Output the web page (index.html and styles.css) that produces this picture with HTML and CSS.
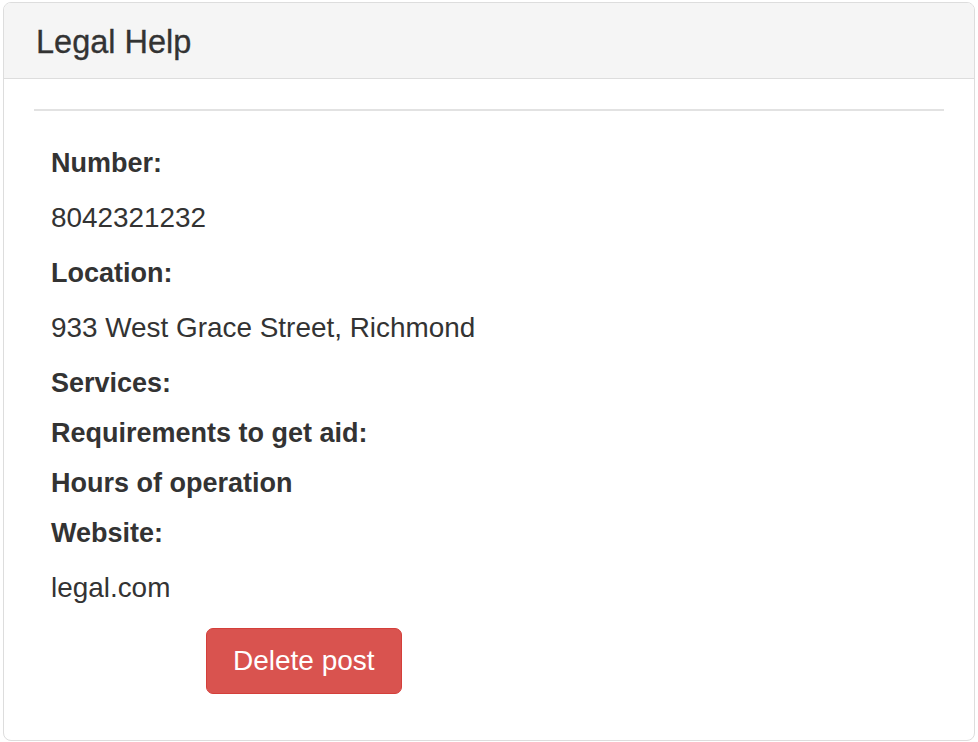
FILE: index.html
```html
<!DOCTYPE html>
<html lang="en">
<head>
<meta charset="utf-8">
<title>Legal Help</title>
<link rel="stylesheet" href="styles.css">
</head>
<body>
  <div class="panel">
    <div class="panel-heading">
      <h3 class="panel-title">Legal Help</h3>
    </div>
    <div class="panel-body">
      <hr class="divider">
      <div class="details">
        <div class="label">Number:</div>
        <div class="value">8042321232</div>
        <div class="label">Location:</div>
        <div class="value">933 West Grace Street, Richmond</div>
        <div class="label">Services:</div>
        <div class="label">Requirements to get aid:</div>
        <div class="label">Hours of operation</div>
        <div class="label">Website:</div>
        <div class="value">legal.com</div>
        <div class="actions">
          <button class="btn-danger" type="button">Delete post</button>
        </div>
      </div>
    </div>
  </div>
</body>
</html>
```

FILE: styles.css
```css
html, body {
  margin: 0;
  padding: 0;
  background: #fff;
}

body {
  font-family: "Liberation Sans", Arial, Helvetica, sans-serif;
  color: #333;
}

.panel {
  margin: 2px 3px;
  border: 1px solid #ddd;
  border-radius: 8px;
  background: #fff;
  overflow: hidden;
}

.panel-heading {
  background: #f5f5f5;
  border-bottom: 1px solid #ddd;
  padding: 22px 32px 18px 32px;
}

.panel-title {
  margin: 0;
  font-size: 32.5px;
  line-height: 35px;
  font-weight: normal;
  color: #333;
  -webkit-text-stroke: 0.3px #333;
}

.panel-body {
  padding: 30px;
}

.divider {
  margin: 0;
  border: 0;
  border-top: 2px solid #e2e2e2;
  height: 0;
}

.details {
  padding: 37px 17px 0 17px;
  display: flex;
  flex-direction: column;
  align-items: flex-start;
}

.label {
  font-size: 27px;
  font-weight: bold;
  line-height: 30px;
  margin-bottom: 20px;
}

.value {
  font-size: 27.9px;
  line-height: 40px;
  margin-bottom: 20px;
}

.actions {
  margin-left: 155px;
  margin-bottom: 16px;
}

.btn-danger {
  font-family: "Liberation Sans", Arial, Helvetica, sans-serif;
  font-size: 28px;
  line-height: 40px;
  padding: 12px 26px;
  color: #fff;
  background: #d9534f;
  border: 1px solid #d43f3a;
  border-radius: 7px;
  cursor: pointer;
}
```
